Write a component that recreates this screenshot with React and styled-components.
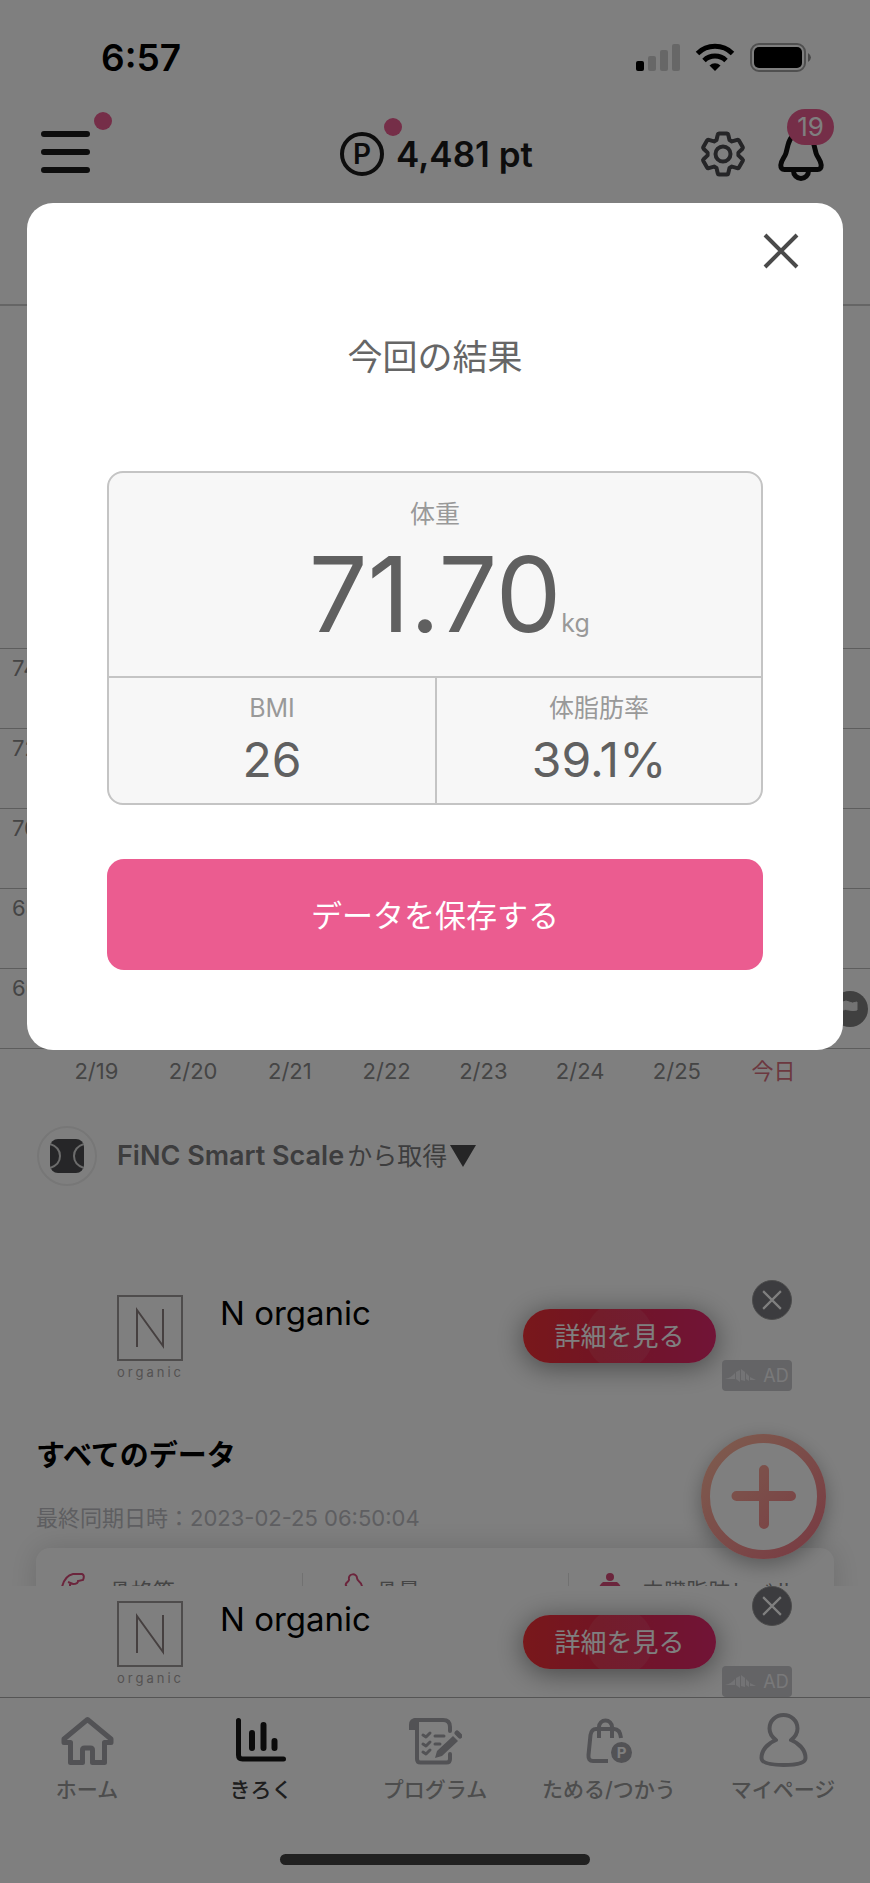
import React from 'react';
import styled, { createGlobalStyle } from 'styled-components';

const WEIGHT_LABELS = ['74', '72', '70', '68', '66'];
const DATES = ['2/19', '2/20', '2/21', '2/22', '2/23', '2/24', '2/25'];

const StatusIcons = () => (
  <svg width="176" height="30" viewBox="0 0 176 30" aria-hidden="true">
    <rect x="0" y="18" width="8" height="10" rx="2" fill="#000" />
    <rect x="12" y="13" width="8" height="15" rx="2" fill="#cfcfcf" />
    <rect x="24" y="7" width="8" height="21" rx="2" fill="#cfcfcf" />
    <rect x="36" y="1" width="8" height="27" rx="2" fill="#cfcfcf" />
    <g fill="none" stroke="#000" strokeWidth="5">
      <path d="M61.5 10.5 A25 25 0 0 1 96.5 10.5" />
      <path d="M68 17.5 A16 16 0 0 1 90 17.5" />
    </g>
    <path d="M73.5 22.5 A8 8 0 0 1 84.5 22.5 L79 28 Z" fill="#000" />
    <rect
      x="115"
      y="1"
      width="54"
      height="27"
      rx="8"
      fill="none"
      stroke="#a0a0a0"
      strokeWidth="2"
    />
    <rect x="118" y="4" width="48" height="21" rx="5" fill="#000" />
    <path d="M172 10 Q175 12 175 14.5 T172 19 Z" fill="#909090" />
  </svg>
);

const MenuIcon = () => (
  <svg width="49" height="48" viewBox="0 0 49 48" aria-hidden="true">
    <path
      d="M3 4 H46 M3 22 H46 M3 40 H46"
      stroke="#1a1a1a"
      strokeWidth="6"
      strokeLinecap="round"
    />
  </svg>
);

const GearIcon = () => (
  <svg width="46" height="46" viewBox="0 0 46 46" aria-hidden="true">
    <g
      fill="none"
      stroke="#4a4a4e"
      strokeWidth="4"
      strokeLinejoin="round"
      strokeLinecap="round"
    >
      <path d="M16.5 9 L17.8 3.5 Q18 2.5 19 2.5 H27 Q28 2.5 28.2 3.5 L29.5 9 L31.9 10.4 L37.3 8.8 Q38.3 8.5 38.8 9.3 L42.8 16.2 Q43.3 17.1 42.5 17.8 L38.4 21.6 V24.4 L42.5 28.2 Q43.3 28.9 42.8 29.8 L38.8 36.7 Q38.3 37.5 37.3 37.2 L31.9 35.6 L29.5 37 L28.2 42.5 Q28 43.5 27 43.5 H19 Q18 43.5 17.8 42.5 L16.5 37 L14.1 35.6 L8.7 37.2 Q7.7 37.5 7.2 36.7 L3.2 29.8 Q2.7 28.9 3.5 28.2 L7.6 24.4 V21.6 L3.5 17.8 Q2.7 17.1 3.2 16.2 L7.2 9.3 Q7.7 8.5 8.7 8.8 L14.1 10.4 Z" />
      <circle cx="23" cy="23" r="7.5" />
    </g>
  </svg>
);

const BellIcon = () => (
  <svg width="46" height="54" viewBox="0 0 46 54" aria-hidden="true">
    <g fill="none" stroke="#111" strokeWidth="5" strokeLinejoin="round">
      <path d="M23 6 C15 6 11.5 12 10 18 L8 26 C7 30 3 33 2.8 38 Q2.7 42.5 6.5 42.5 H39.5 Q43.3 42.5 43.2 38 C43 33 39 30 38 26 L36 18 C34.5 12 31 6 23 6 Z" />
      <path d="M15.5 44 A7.5 7.5 0 0 0 30.5 44" />
    </g>
  </svg>
);

const CrossIcon = ({ size, color, width }) => (
  <svg width={size} height={size} viewBox="0 0 36 36" aria-hidden="true">
    <path d="M2 2 L34 34 M34 2 L2 34" stroke={color} strokeWidth={width} />
  </svg>
);

const FlagIcon = () => (
  <svg width="36" height="36" viewBox="0 0 36 36" aria-hidden="true">
    <circle cx="18" cy="18" r="18" fill="#808080" />
    <path
      d="M10 10 V27 M11 11 Q14 9 17 11 T25 11 V19 Q21 20 17 19 T11 19 Z"
      fill="#e6e6e6"
      stroke="#e6e6e6"
    />
  </svg>
);

const ScaleIcon = () => (
  <svg width="34" height="34" viewBox="0 0 34 34" aria-hidden="true">
    <rect width="34" height="34" rx="8" fill="#4c4d50" />
    <g fill="none" stroke="#d8d8d8" strokeWidth="2">
      <path d="M0 5 C6 7 10 11 10 17 S6 27 0 29" />
      <path d="M34 5 C28 7 24 11 24 17 S28 27 34 29" />
    </g>
  </svg>
);

const TriangleIcon = () => (
  <svg width="26" height="22" viewBox="0 0 26 22" aria-hidden="true">
    <path d="M0 0 H26 L13 22 Z" fill="#4a4a4c" />
  </svg>
);

const OrganicMark = () => (
  <svg width="66" height="66" viewBox="0 0 66 66" aria-hidden="true">
    <rect
      x="1"
      y="1"
      width="64"
      height="64"
      fill="none"
      stroke="#9c9898"
      strokeWidth="2"
    />
    <path
      d="M20 52 V15 L46 51 V14"
      fill="none"
      stroke="#8c8080"
      strokeWidth="2"
    />
  </svg>
);

const NetworkMark = () => (
  <svg width="32" height="13" viewBox="0 0 32 13" aria-hidden="true">
    <g fill="#e6e6ea">
      <path d="M0 10 Q6 9 10 4 V10 Z" />
      <path d="M11 3 L15 1 V13 L11 10 Z" />
      <path d="M16 0 L20 3 V12 L16 11 Z" />
      <path d="M21 4 L24 7 V12 L21 10 Z" />
      <path d="M25 8 L31 11 L25 11 Z" />
    </g>
  </svg>
);

const PlusIcon = () => (
  <svg width="125" height="125" viewBox="0 0 125 125" aria-hidden="true">
    <defs>
      <linearGradient
        id="plus"
        gradientUnits="userSpaceOnUse"
        x1="15"
        y1="15"
        x2="110"
        y2="110"
      >
        <stop offset="0" stopColor="#fcb49c" />
        <stop offset="1" stopColor="#f27c88" />
      </linearGradient>
    </defs>
    <circle
      cx="62.5"
      cy="62.5"
      r="58"
      fill="#fff"
      stroke="url(#plus)"
      strokeWidth="9"
    />
    <path
      d="M35.5 62 H90 M63 36 V90"
      stroke="url(#plus)"
      strokeWidth="10"
      strokeLinecap="round"
    />
  </svg>
);

const MuscleIcon = () => (
  <svg width="37" height="40" viewBox="0 0 37 40" aria-hidden="true">
    <path
      d="M3 14 C5 6 9 2 14 1 L23 1 Q26 2 24 7 L19 8 Q19 11 14 11 L9 9 M11 10 V15 C22 12 32 18 32 27 C26 36 10 36 3 30"
      fill="none"
      stroke="#d64a78"
      strokeWidth="2"
    />
  </svg>
);

const BoneIcon = () => (
  <svg width="37" height="40" viewBox="0 0 37 40" aria-hidden="true">
    <path
      d="M21 14 C17 10 24 9 23 6 C22 0 31 0 31 5 C31 9 36 8 36 14 C34 19 30 17 27 20 L17 31 C15 37 9 38 8 33 C3 31 6 26 11 25 L20 16 Z"
      fill="none"
      stroke="#d64a78"
      strokeWidth="2"
    />
  </svg>
);

const BodyIcon = () => (
  <svg width="37" height="40" viewBox="0 0 37 40" aria-hidden="true">
    <g fill="#d64a78">
      <circle cx="18" cy="4" r="4" />
      <path d="M11 9 H25 Q31 13 32 28 L28 30 L25 20 V38 H11 V20 L8 30 L4 28 Q5 13 11 9 Z" />
    </g>
  </svg>
);

const HomeIcon = () => (
  <svg width="53" height="50" viewBox="0 0 53 50" aria-hidden="true">
    <path
      d="M26.5 3.5 L3 23 V26.5 H9.5 V46.5 H21.5 V34 Q21.5 32 23.5 32 H29.5 Q31.5 32 31.5 34 V46.5 H43.5 V26.5 H50 V23 Z"
      fill="none"
      stroke="#a4a4aa"
      strokeWidth="5"
      strokeLinejoin="round"
    />
  </svg>
);

const RecordIcon = () => (
  <svg width="50" height="50" viewBox="0 0 50 50" aria-hidden="true">
    <g fill="none" stroke="#161616" strokeLinecap="round">
      <path d="M2.5 4.5 V39 Q2.5 43 6.5 43 H47.5" strokeWidth="5" />
      <path d="M16 17 V32 M27.5 9 V32 M38.5 25 V32" strokeWidth="6" />
    </g>
  </svg>
);

const ProgramIcon = () => (
  <svg width="54" height="50" viewBox="0 0 54 50" aria-hidden="true">
    <g
      fill="none"
      stroke="#a4a4aa"
      strokeWidth="4"
      strokeLinecap="round"
      strokeLinejoin="round"
    >
      <path d="M9 5 V43 Q9 46.5 12.5 46.5 H38.5 Q42 46.5 42 43 V38" />
      <path d="M7 4 H35 Q42 4 42 11 V15" />
      <path
        d="M15 19 L18 21 L22 17 M15 28 L18 30 L22 26 M15 36 L18 38 L22 34 M27 20 H36 M27 28 H32"
        strokeWidth="3"
      />
    </g>
    <path d="M1 14 V9 Q1 2 8 2 H9 V14 Z" fill="#a4a4aa" />
    <path d="M45 20 L50 25 L34 40 L27 42 L29 35 Z" fill="#a4a4aa" />
    <path
      d="M49 17 L52 20"
      stroke="#a4a4aa"
      strokeWidth="5"
      strokeLinecap="round"
    />
  </svg>
);

const BagIcon = () => (
  <svg width="46" height="50" viewBox="0 0 46 50" aria-hidden="true">
    <g fill="none" stroke="#a4a4aa" strokeWidth="4">
      <path d="M35 22 Q34 13 28 13 H10 Q5.5 13 4.5 19 L2.5 39 Q2 45 7 45 H22" />
      <path d="M13 22 V11 A6.5 6.5 0 0 1 26 11 V22" />
    </g>
    <circle cx="35.5" cy="36.5" r="10.5" fill="#a4a4aa" />
    <text
      x="35.5"
      y="42"
      textAnchor="middle"
      fontFamily="Inter, sans-serif"
      fontSize="15"
      fontWeight="700"
      fill="#fff"
    >
      P
    </text>
  </svg>
);

const PersonIcon = () => (
  <svg width="49" height="56" viewBox="0 0 49 56" aria-hidden="true">
    <path
      d="M17 27 C13 24 10.5 20 10.5 15.5 C10.5 7.5 17 2 24.5 2 S38.5 7.5 38.5 15.5 C38.5 20 36 24 32 27 C40 30 46.5 37 46.5 45 C46.5 50 38 52 24.5 52 S2.5 50 2.5 45 C2.5 37 9 30 17 27 Z"
      fill="none"
      stroke="#a4a4aa"
      strokeWidth="4"
      strokeLinejoin="round"
    />
  </svg>
);

const METRICS = [
  { name: '骨格筋', Icon: MuscleIcon },
  { name: '骨量', Icon: BoneIcon },
  { name: '内臓脂肪レベル', Icon: BodyIcon },
];

const TABS = [
  { name: 'ホーム', Icon: HomeIcon },
  { name: 'きろく', Icon: RecordIcon, active: true },
  { name: 'プログラム', Icon: ProgramIcon },
  { name: 'ためる/つかう', Icon: BagIcon },
  { name: 'マイページ', Icon: PersonIcon },
];

const AdBanner = () => (
  <Ad>
    <AdLogo>
      <OrganicMark />
      <AdLogoText>organic</AdLogoText>
    </AdLogo>
    <AdName>N organic</AdName>
    <AdButton type="button">詳細を見る</AdButton>
    <AdSide>
      <AdClose type="button" aria-label="広告を閉じる">
        <CrossIcon size={20} color="#fff" width={4} />
      </AdClose>
      <AdTag>
        <NetworkMark />
        AD
      </AdTag>
    </AdSide>
  </Ad>
);

const ResultModal = () => (
  <Backdrop>
    <Modal role="dialog" aria-labelledby="result-title">
      <CloseButton type="button" aria-label="閉じる">
        <CrossIcon size={36} color="#4a4a4a" width={4} />
      </CloseButton>
      <ModalTitle id="result-title">今回の結果</ModalTitle>
      <Results>
        <MainResult>
          <Label>体重</Label>
          <Weight>
            <WeightValue>71.70</WeightValue>
            <Unit>kg</Unit>
          </Weight>
        </MainResult>
        <SubResult>
          <Label>BMI</Label>
          <Value>26</Value>
        </SubResult>
        <SubResult>
          <Label>体脂肪率</Label>
          <Value>39.1%</Value>
        </SubResult>
      </Results>
      <SaveButton type="button">データを保存する</SaveButton>
    </Modal>
  </Backdrop>
);

const App = () => {
  return (
    <Screen>
      <GlobalStyle />
      <StatusBar>
        <Time>6:57</Time>
        <StatusIcons />
      </StatusBar>
      <Header>
        <IconButton type="button" aria-label="メニュー">
          <MenuIcon />
          <MenuDot />
        </IconButton>
        <Point>
          <PointMark>
            P
            <PointDot />
          </PointMark>
          4,481 pt
        </Point>
        <HeaderActions>
          <IconButton type="button" aria-label="設定">
            <GearIcon />
          </IconButton>
          <IconButton type="button" aria-label="お知らせ">
            <BellIcon />
            <Badge>19</Badge>
          </IconButton>
        </HeaderActions>
      </Header>
      <Content>
        <PeriodBar />
        <Chart>
          {WEIGHT_LABELS.map(label => (
            <ChartRow key={label}>{label}</ChartRow>
          ))}
          <Goal>
            <FlagIcon />
          </Goal>
        </Chart>
        <Dates>
          {DATES.map(date => (
            <span key={date}>{date}</span>
          ))}
          <Today>今日</Today>
        </Dates>
        <Source>
          <SourceIcon>
            <ScaleIcon />
          </SourceIcon>
          <SourceText type="button">
            <strong>FiNC Smart Scale</strong>
            <span>から取得</span>
            <TriangleIcon />
          </SourceText>
        </Source>
        <AdBanner />
        <DataSection>
          <DataTitle>すべてのデータ</DataTitle>
          <SyncedAt>最終同期日時：2023-02-25 06:50:04</SyncedAt>
          <DataCard>
            {METRICS.map(({ name, Icon }) => (
              <Metric key={name}>
                <Icon />
                {name}
              </Metric>
            ))}
          </DataCard>
        </DataSection>
        <AddButton type="button" aria-label="追加">
          <PlusIcon />
        </AddButton>
      </Content>
      <AdBanner />
      <TabBar>
        <Tabs>
          {TABS.map(({ name, Icon, active }) => (
            <Tab key={name} href="#" $active={active}>
              <TabIcon>
                <Icon />
              </TabIcon>
              {name}
            </Tab>
          ))}
        </Tabs>
        <HomeIndicator />
      </TabBar>
      <ResultModal />
    </Screen>
  );
};

export default App;

const GlobalStyle = createGlobalStyle`
  * {
    box-sizing: border-box;
    margin: 0;
    padding: 0;
  }

  body {
    background-color: #fff;
    font-family: Inter, 'Noto Sans CJK JP', sans-serif;
  }

  button {
    border: none;
    background: none;
    font-family: inherit;
    cursor: pointer;
  }

  svg {
    display: block;
    flex-shrink: 0;
  }
`;

const Screen = styled.div`
  position: relative;
  display: flex;
  flex-direction: column;
  height: 100vh;
  overflow: hidden;
`;

const StatusBar = styled.div`
  display: flex;
  align-items: center;
  justify-content: space-between;
  flex-shrink: 0;
  height: 115px;
  padding: 0 58px 0 101px;
`;

const Time = styled.span`
  font-size: 37px;
  font-weight: 600;
  color: #000;
`;

const Header = styled.header`
  display: grid;
  grid-template-columns: 1fr auto 1fr;
  align-items: center;
  flex-shrink: 0;
  height: 78px;
  padding: 0 46px 0 41px;
`;

const IconButton = styled.button`
  position: relative;
  justify-self: start;
`;

const dotSize = `
  width: 18px;
  height: 18px;
  border-radius: 50%;
  background-color: #eb5c90;
`;

const MenuDot = styled.span`
  position: absolute;
  top: -18px;
  left: 53px;
  ${dotSize}
`;

const Point = styled.div`
  display: flex;
  align-items: center;
  gap: 12px;
  padding-left: 8px;
  font-size: 35px;
  font-weight: 600;
  color: #1a1a1a;
`;

const PointMark = styled.span`
  position: relative;
  display: flex;
  align-items: center;
  justify-content: center;
  width: 44px;
  height: 44px;
  border: 4px solid #1a1a1a;
  border-radius: 50%;
  font-size: 28px;
`;

const PointDot = styled.span`
  position: absolute;
  top: -18px;
  right: -22px;
  ${dotSize}
`;

const HeaderActions = styled.div`
  display: flex;
  align-items: center;
  justify-content: flex-end;
  gap: 32px;
`;

const Badge = styled.span`
  position: absolute;
  top: -18px;
  left: 9px;
  width: 47px;
  border-radius: 18px;
  background-color: #eb5c90;
  font-size: 26px;
  line-height: 36px;
  text-align: center;
  color: #fff;
`;

const Content = styled.main`
  position: relative;
  flex: 1;
  min-height: 0;
  overflow: hidden;
`;

const PeriodBar = styled.div`
  height: 113px;
  border-bottom: 2px solid #cacaca;
`;

const Chart = styled.div`
  position: relative;
  padding-top: 342px;
  border-bottom: 1px solid #bbb;
`;

const ChartRow = styled.div`
  height: 80px;
  padding: 6px 12px;
  border-top: 1px solid #bbb;
  font-size: 22px;
  line-height: 27px;
  color: #8a8a8a;
`;

const Goal = styled.span`
  position: absolute;
  right: 2px;
  bottom: 21px;
`;

const Dates = styled.div`
  display: grid;
  grid-template-columns: repeat(8, 1fr);
  padding: 6px 48px 8px;
  font-size: 22px;
  line-height: 32px;
  text-align: center;
  color: #8a8a8a;
`;

const Today = styled.span`
  color: #d87080;
`;

const Source = styled.div`
  display: flex;
  align-items: center;
  gap: 20px;
  padding: 31px 37px 94px;
`;

const SourceIcon = styled.span`
  display: flex;
  align-items: center;
  justify-content: center;
  width: 60px;
  height: 60px;
  border: 2px solid #eee;
  border-radius: 50%;
`;

const SourceText = styled.button`
  display: flex;
  align-items: center;
  gap: 3px;
  font-size: 25px;
  line-height: 32px;
  color: #7a7a7c;

  strong {
    font-size: 27px;
    font-weight: 600;
  }
`;

const Ad = styled.aside`
  display: flex;
  align-items: flex-start;
  flex-shrink: 0;
  height: 111px;
  padding: 0 78px 0 117px;
  background-color: #fff;
`;

const AdLogo = styled.div`
  width: 66px;
  margin: 15px 37px 0 0;
`;

const AdLogoText = styled.div`
  padding-top: 2px;
  font-size: 13px;
  line-height: 18px;
  letter-spacing: 3px;
  color: #a8a4a4;
`;

const AdName = styled.div`
  flex: 1;
  padding-top: 13px;
  font-size: 33px;
  line-height: 40px;
  color: #000;
`;

const AdButton = styled.button`
  width: 193px;
  height: 54px;
  margin: 29px 6px 0 0;
  padding-bottom: 3px;
  border-radius: 27px;
  background: radial-gradient(
      circle at center,
      rgba(255, 255, 255, 0.08) 33px,
      transparent 34px
    ),
    linear-gradient(to right, #f23036, #e42a48 40%, #e2286e);
  box-shadow: 0 4px 28px rgba(0, 0, 0, 0.45);
  font-size: 26px;
  color: #fff;
`;

const AdSide = styled.div`
  display: flex;
  flex-direction: column;
  align-items: flex-end;
  justify-content: space-between;
  height: 100%;
`;

const AdClose = styled.button`
  display: flex;
  align-items: center;
  justify-content: center;
  width: 40px;
  height: 40px;
  border: 1px solid #999;
  border-radius: 50%;
  background-color: #78787e;
`;

const AdTag = styled.span`
  display: flex;
  align-items: center;
  justify-content: center;
  gap: 6px;
  width: 70px;
  height: 31px;
  border-radius: 4px;
  background-color: #c8c8cc;
  font-size: 18px;
  color: #f2f2f4;
`;

const DataSection = styled.section`
  padding: 45px 36px 0;
`;

const DataTitle = styled.h2`
  font-size: 29px;
  line-height: 40px;
  color: #000;
`;

const SyncedAt = styled.p`
  margin: 26px 0 14px;
  font-size: 22px;
  line-height: 32px;
  color: #bcbcc2;
`;

const DataCard = styled.div`
  display: grid;
  grid-template-columns: repeat(3, 1fr);
  padding: 25px 0;
  border-radius: 14px;
  background-color: #fff;
  box-shadow: 0 0 30px rgba(0, 0, 0, 0.15);
`;

const Metric = styled.div`
  display: flex;
  align-items: flex-start;
  gap: 13px;
  padding-left: 23px;
  font-size: 22px;
  line-height: 36px;
  white-space: nowrap;
  color: #8a8a8a;

  & + & {
    border-left: 1px solid #e2e2e2;
  }
`;

const AddButton = styled.button`
  position: absolute;
  right: 44px;
  bottom: 27px;
  border-radius: 50%;
  box-shadow: 0 6px 20px rgba(0, 0, 0, 0.3);
`;

const TabBar = styled.nav`
  display: flex;
  flex-direction: column;
  align-items: center;
  justify-content: space-between;
  flex-shrink: 0;
  height: 186px;
  padding-bottom: 18px;
  border-top: 1px solid #aaa;
  background-color: #fff;
`;

const Tabs = styled.div`
  display: grid;
  grid-template-columns: repeat(5, 1fr);
  width: 100%;
`;

const Tab = styled.a`
  display: flex;
  flex-direction: column;
  align-items: center;
  font-size: 21px;
  font-weight: 500;
  line-height: 32px;
  text-decoration: none;
  white-space: nowrap;
  color: ${({ $active }) => ($active ? '#3c3c3c' : '#9a9a9a')};
`;

const TabIcon = styled.span`
  display: flex;
  align-items: center;
  height: 62px;
  margin: 12px 0 2px;
`;

const HomeIndicator = styled.span`
  width: 310px;
  height: 11px;
  border-radius: 6px;
  background-color: #424242;
`;

const Backdrop = styled.div`
  position: absolute;
  inset: 0;
  padding: 203px 27px 0;
  background-color: rgba(0, 0, 0, 0.5);
  z-index: 10;
`;

const Modal = styled.section`
  display: flex;
  flex-direction: column;
  padding: 30px 80px 80px;
  border-radius: 26px;
  background-color: #fff;
`;

const CloseButton = styled.button`
  align-self: flex-end;
  margin-right: -36px;
`;

const ModalTitle = styled.h1`
  padding: 61px 0 87px;
  font-size: 35px;
  font-weight: 400;
  line-height: 54px;
  text-align: center;
  color: #666;
`;

const Results = styled.dl`
  display: grid;
  grid-template-columns: 1fr 1fr;
  border: 2px solid #c4c4c4;
  border-radius: 16px;
  background-color: #f7f7f7;
  text-align: center;
`;

const MainResult = styled.div`
  grid-column: 1 / -1;
  height: 203px;
  padding-top: 22px;
`;

const SubResult = styled.div`
  height: 127px;
  padding-top: 11px;
  border-top: 2px solid #c4c4c4;

  & + & {
    border-left: 2px solid #c4c4c4;
  }

  ${MainResult} + & {
    border-left: none;
  }
`;

const Label = styled.dt`
  font-size: 25px;
  line-height: 38px;
  color: #999;
`;

const Weight = styled.dd`
  display: grid;
  grid-template-columns: 1fr auto 1fr;
  align-items: baseline;
`;

const WeightValue = styled.span`
  grid-column: 2;
  font-size: 104px;
  line-height: 122px;
  color: #606060;
`;

const Unit = styled.span`
  justify-self: start;
  font-size: 25px;
  color: #999;
`;

const Value = styled.dd`
  font-size: 48px;
  line-height: 66px;
  color: #606060;
`;

const SaveButton = styled.button`
  height: 111px;
  margin-top: 54px;
  padding-bottom: 3px;
  border-radius: 17px;
  background-color: #eb5c90;
  font-size: 31px;
  color: #fff;
`;
